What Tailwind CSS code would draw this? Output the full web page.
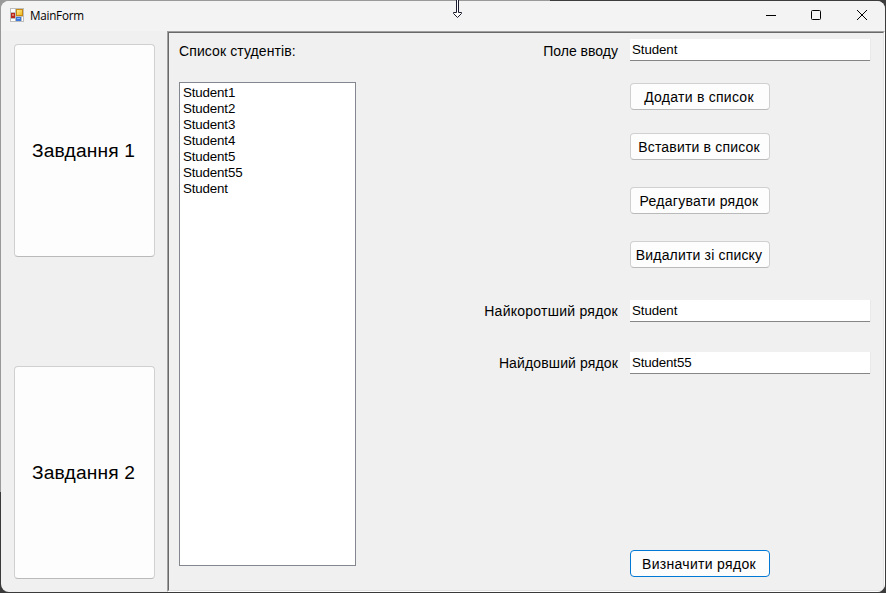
<!DOCTYPE html>
<html lang="uk">
<head>
<meta charset="utf-8">
<title>MainForm</title>
<script src="https://cdn.jsdelivr.net/npm/@tailwindcss/browser@4"></script>
</head>
<body class="w-[886px] h-[593px] overflow-hidden bg-[linear-gradient(to_bottom,#999_0,#999_492px,#3a3a3a_492px)] text-black font-['Liberation_Sans',Arial,sans-serif] text-[14px]">
<div class="w-[886px] h-[593px] p-px bg-[linear-gradient(to_right,transparent_0,transparent_550px,#3c3c3c_550px)]">
  <div class="w-[884px] h-[591px] rounded-lg overflow-hidden bg-[#f0f0f0] flex flex-col">
    <header class="h-[30px] pb-[2px] shrink-0 bg-[#f3f3f3] flex items-center">
      <svg class="ml-[9px] w-[14px] h-[14px] shrink-0" viewBox="0 0 14 14">
        <defs>
          <linearGradient id="gold" x1="0" y1="0" x2="1" y2="1"><stop offset="0" stop-color="#fff0a0"/><stop offset="1" stop-color="#f0b010"/></linearGradient>
        </defs>
        <rect width="14" height="14" fill="#bdbdbd"/>
        <rect x="1" y="1" width="4" height="3" fill="#fff"/>
        <rect x="1" y="11" width="4" height="2" fill="#fff"/>
        <rect x="12" y="9" width="1" height="4" fill="#fff"/>
        <rect x="6.5" y="1.5" width="6" height="6" fill="url(#gold)" stroke="#c68a10"/>
        <rect x="1" y="5" width="4" height="5" fill="#b8281e"/>
        <rect x="2" y="6" width="2" height="2" fill="#e07a68"/>
        <rect x="6" y="9" width="5" height="4" fill="#3c78dc"/>
        <rect x="7" y="10" width="3" height="1" fill="#8ab8f8"/>
      </svg>
      <span class="ml-[6px] mt-px font-['Open_Sans','Noto_Sans',sans-serif] text-[11.7px] tracking-[-0.25px]">MainForm</span>
      <svg class="ml-auto mr-[16px] w-[104px] h-[12px]" viewBox="0 0 104 12" fill="none" stroke="#000">
        <path d="M1 6.5h10"/>
        <rect x="46.5" y="1.5" width="9" height="9" rx="1"/>
        <path d="M92 1l10 10M102 1l-10 10"/>
      </svg>
    </header>
    <div class="flex-1 flex">
      <nav class="w-[166px] shrink-0 pl-[13px] pt-[13px] flex flex-col gap-[109px] text-[19.2px] tracking-[0.15px]">
        <button class="w-[141px] h-[213px] pr-[2px] pt-[2px] rounded-[4px] border border-[#d0d0d0] border-b-[#bababa] bg-[#fdfdfd] whitespace-nowrap">Завдання 1</button>
        <button class="w-[141px] h-[213px] pr-[2px] pt-[2px] rounded-[4px] border border-[#d0d0d0] border-b-[#bababa] bg-[#fdfdfd] whitespace-nowrap">Завдання 2</button>
      </nav>
      <main class="w-[718px] border border-t-[#a0a0a0] border-l-[#a0a0a0] border-r-white border-b-white">
        <div class="h-full border border-t-[#696969] border-l-[#696969] border-r-[#e3e3e3] border-b-[#e3e3e3] flex">
          <section class="ml-[10px] w-[177px] pt-[10px]">
            <h1 class="h-[39px] leading-4 tracking-[0.1px] whitespace-nowrap">Список студентів:</h1>
            <ul class="h-[484px] border border-[#828790] bg-white pl-[3px] pt-[2px] leading-4 text-[13.33px] tracking-[-0.15px]">
              <li>Student1</li>
              <li>Student2</li>
              <li>Student3</li>
              <li>Student4</li>
              <li>Student5</li>
              <li>Student55</li>
              <li>Student</li>
            </ul>
          </section>
          <section class="ml-auto mr-[13px] pt-[6px] grid grid-cols-[auto_240px] gap-x-[12px] auto-rows-min justify-items-start">
            <label class="justify-self-end mt-[4px] leading-4">Поле вводу</label>
            <div class="w-[240px] h-[22px] bg-white border-b border-[#868686] pl-[2px] pt-[3px] leading-4 text-[13.33px] tracking-[-0.1px] shadow-[1px_0_0_#e8e8e8]">Student</div>
            <button class="col-start-2 mt-[22px] w-[140px] h-[27px] rounded-[4px] border border-[#d0d0d0] border-b-[#bababa] bg-[#fdfdfd] pt-[2px] pr-[2px] whitespace-nowrap tracking-[0.26px]">Додати в список</button>
            <button class="col-start-2 mt-[23px] w-[140px] h-[27px] rounded-[4px] border border-[#d0d0d0] border-b-[#bababa] bg-[#fdfdfd] pt-[2px] pr-[2px] whitespace-nowrap tracking-[0.17px]">Вставити в список</button>
            <button class="col-start-2 mt-[27px] w-[140px] h-[27px] rounded-[4px] border border-[#d0d0d0] border-b-[#bababa] bg-[#fdfdfd] pt-[2px] pr-[2px] whitespace-nowrap tracking-[0.27px]">Редагувати рядок</button>
            <button class="col-start-2 mt-[27px] w-[140px] h-[27px] rounded-[4px] border border-[#d0d0d0] border-b-[#bababa] bg-[#fdfdfd] pt-[2px] pr-[2px] whitespace-nowrap tracking-[0.17px]">Видалити зі списку</button>
            <label class="justify-self-end mt-[35px] leading-4 tracking-[0.25px]">Найкоротший рядок</label>
            <div class="mt-[32px] w-[240px] h-[22px] bg-white border-b border-[#868686] pl-[2px] pt-[3px] leading-4 text-[13.33px] tracking-[-0.1px] shadow-[1px_0_0_#e8e8e8]">Student</div>
            <label class="justify-self-end mt-[33px] leading-4 tracking-[0.13px]">Найдовший рядок</label>
            <div class="mt-[30px] w-[240px] h-[22px] bg-white border-b border-[#868686] pl-[2px] pt-[3px] leading-4 text-[13.33px] tracking-[-0.15px] shadow-[1px_0_0_#e8e8e8]">Student55</div>
            <button class="col-start-2 mt-[176px] w-[140px] h-[27px] rounded-[4px] border border-[#0078d4] bg-[#fdfdfd] pt-[2px] pr-[2px] whitespace-nowrap tracking-[0.3px]">Визначити рядок</button>
          </section>
        </div>
      </main>
    </div>
  </div>
</div>
<!-- vertical resize cursor over the top edge -->
<svg class="absolute left-[452px] top-0 w-[11px] h-[19px]" viewBox="0 0 11 19">
  <path d="M4.5 -1V12.5H1.5V13.5L5.5 17.5L9.5 13.5V12.5H6.5V-1z" fill="#fff" stroke="#1c1c30" stroke-width="1"/>
</svg>
</body>
</html>
